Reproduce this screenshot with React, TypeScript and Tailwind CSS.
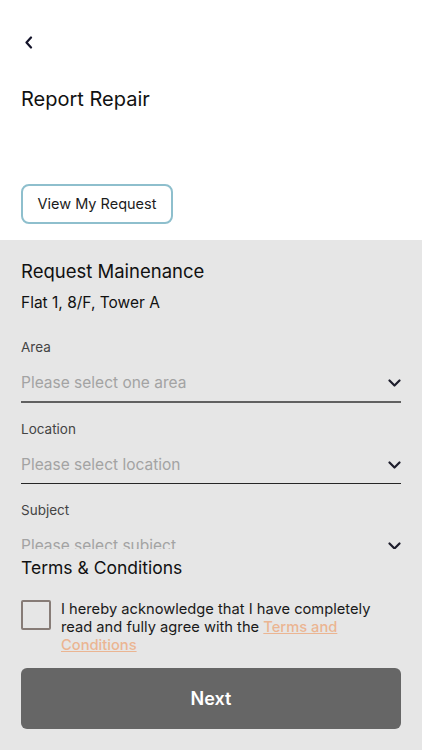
const font = { fontFamily: "Inter, 'Noto Sans', sans-serif" };

function ChevronDown() {
  return (
    <svg width="13" height="8" viewBox="0 0 13 8" fill="none" className="shrink-0">
      <path d="M1.5 1.5L6.5 6.5L11.5 1.5" stroke="#1e1e2c" strokeWidth="2.2" strokeLinecap="round" strokeLinejoin="round" />
    </svg>
  );
}

function SelectField({
  label,
  placeholder,
  lineClass,
}: {
  label: string;
  placeholder: string;
  lineClass: string;
}) {
  return (
    <div>
      <div className="text-[13.5px] leading-[18px] text-[#444]">{label}</div>
      <div className={`mt-[17px] flex items-center justify-between pb-[8px] ${lineClass}`}>
        <span className="text-[15.5px] leading-[20px] text-[#a3a3a3]">{placeholder}</span>
        <ChevronDown />
      </div>
    </div>
  );
}

export default function App() {
  return (
    <div className="flex h-[750px] w-[422px] flex-col overflow-hidden bg-[#e6e6e6]" style={font}>
      <div className="h-[240px] shrink-0 bg-white px-[21px]">
        <div className="pt-[36px] pl-[3px]">
          <svg width="9" height="13" viewBox="0 0 9 13" fill="none">
            <path d="M7 1.5L2.5 6.5L7 11.5" stroke="#14142a" strokeWidth="2.2" strokeLinecap="round" strokeLinejoin="round" />
          </svg>
        </div>
        <h1 className="mt-[37px] text-[20px] leading-[26px] text-[#111]">Report Repair</h1>
        <button className="mt-[72px] h-[40px] w-[152px] rounded-[8px] border-2 border-[#8ebfcd] text-[14.5px] text-[#1c1c1c]">
          View My Request
        </button>
      </div>

      <div className="flex flex-1 flex-col px-[21px]">
        <div className="h-[309px] shrink-0 overflow-hidden pt-[19px]">
          <div className="text-[18.5px] leading-[24px] text-[#111]">Request Mainenance</div>
          <div className="mt-[10px] text-[15.5px] leading-[20px] text-[#111]">Flat 1, 8/F, Tower A</div>
          <div className="mt-[25px] flex flex-col gap-[17px]">
            <SelectField label="Area" placeholder="Please select one area" lineClass="border-b-2 border-[#606060]" />
            <SelectField label="Location" placeholder="Please select location" lineClass="border-b-[1.5px] border-[#262626]" />
            <SelectField label="Subject" placeholder="Please select subject" lineClass="border-b-[1.5px] border-[#262626]" />
          </div>
        </div>

        <div className="mt-[8px] text-[17.5px] leading-[22px] text-[#111]">Terms &amp; Conditions</div>
        <div className="mt-[21px] flex gap-[10px]">
          <div className="h-[30px] w-[30px] shrink-0 rounded-[2px] border-2 border-[#877c77]" />
          <p className="text-[14.7px] leading-[18px] text-[#1a1a1a]">
            I hereby acknowledge that I have completely read and fully agree with the{" "}
            <span className="font-medium text-[#ebb592] underline">Terms and Conditions</span>
          </p>
        </div>
        <button className="mt-[14px] h-[61px] w-full rounded-[6px] bg-[#666] text-[18px] font-semibold text-white">
          Next
        </button>
      </div>
    </div>
  );
}
